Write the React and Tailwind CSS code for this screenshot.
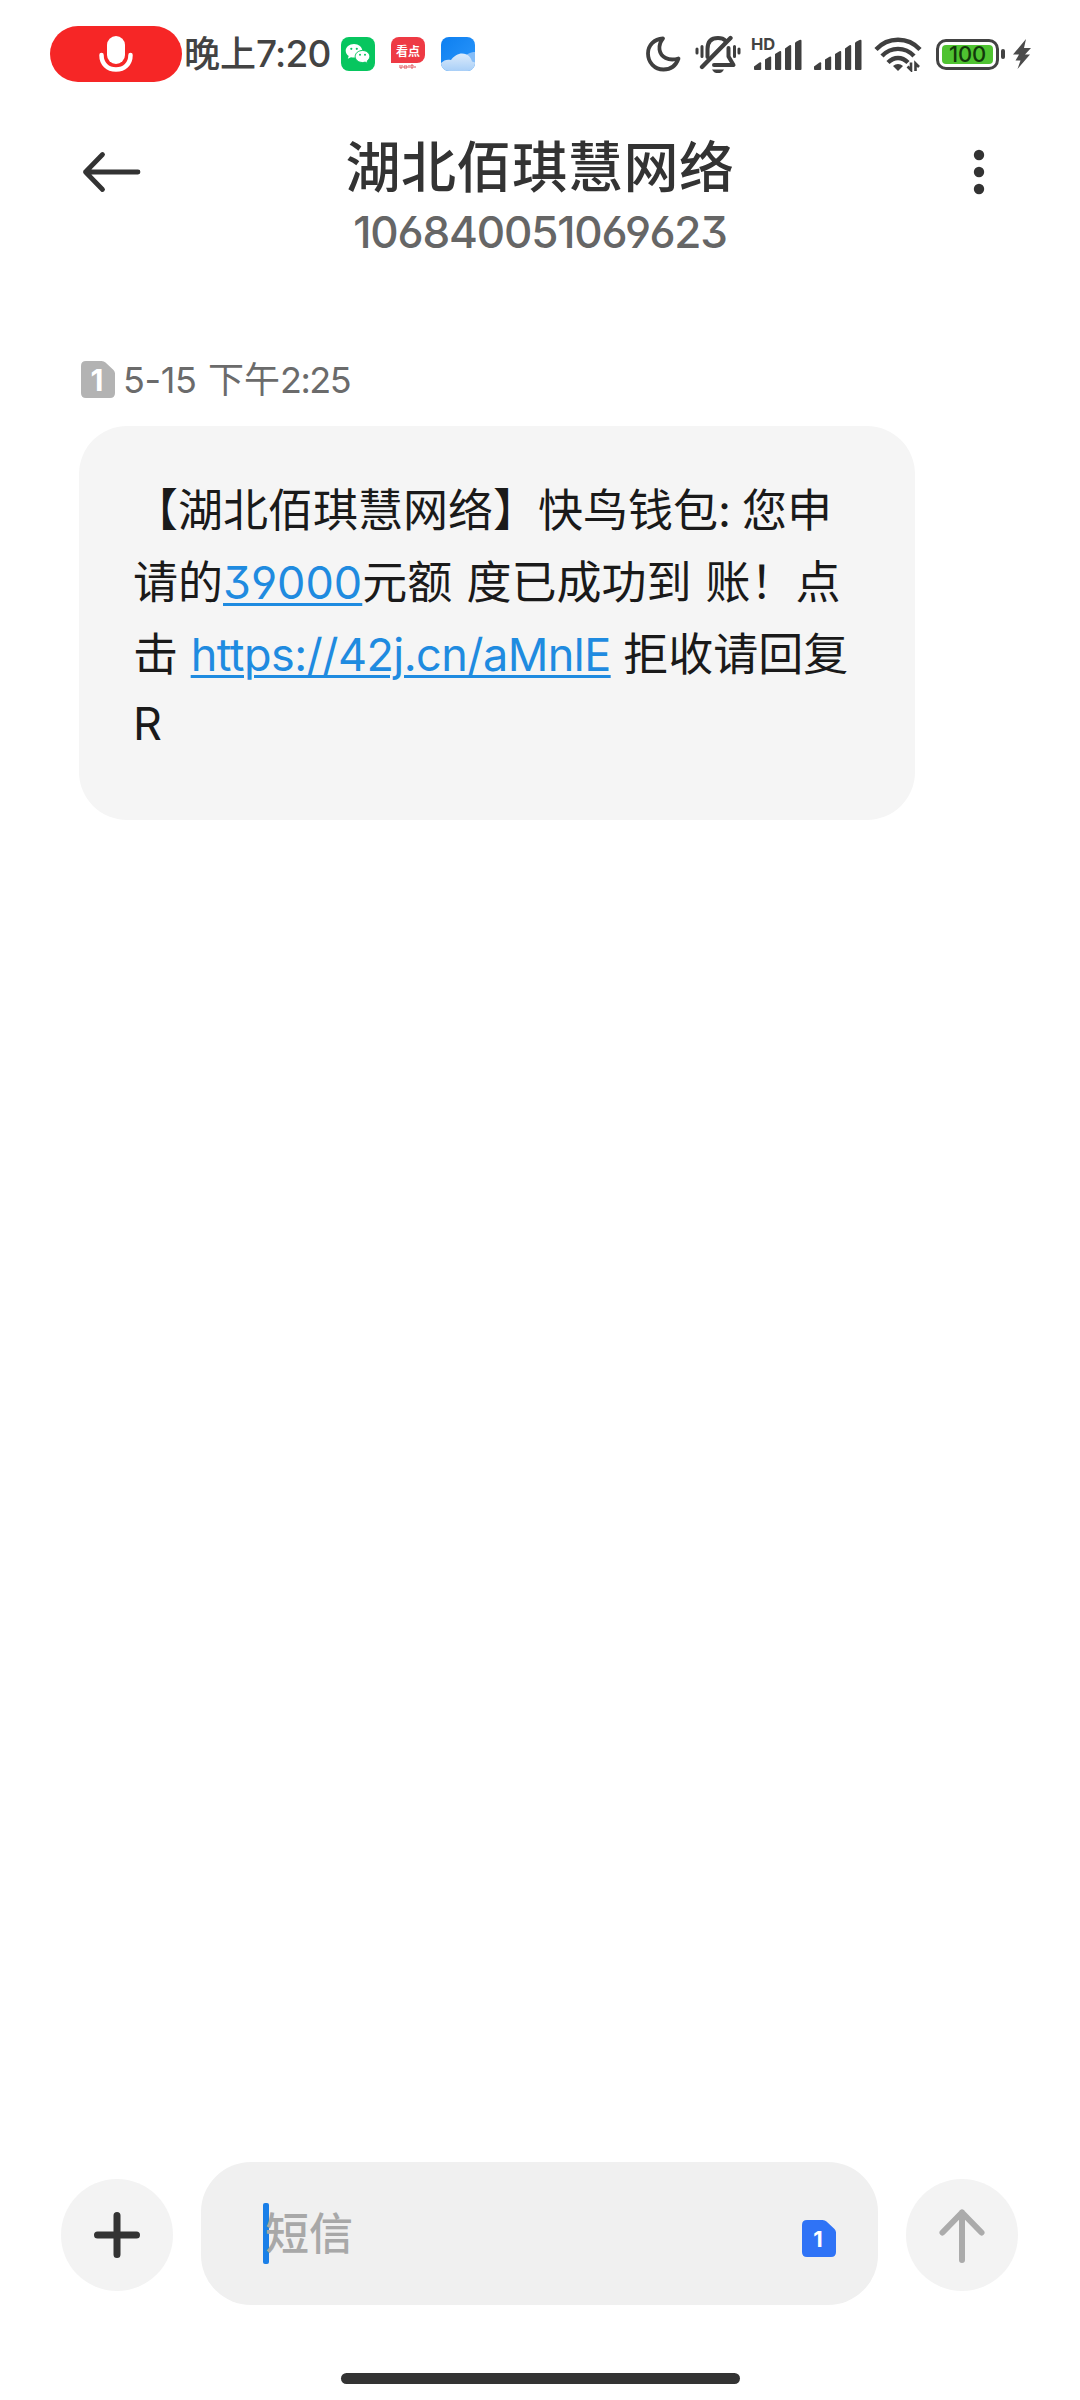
const FONT = "font-['Inter','Noto_Sans_CJK_SC',sans-serif]";

function Han({ children, className = "" }) {
  return <span className={"font-['Noto_Sans_CJK_SC',sans-serif] " + className}>{children}</span>;
}

function Num({ children, className = "" }) {
  return (
    <span className={"[font-feature-settings:'cv03','cv04','cv09'] font-['Inter',sans-serif] " + className}>
      {children}
    </span>
  );
}

function Signal({ className }) {
  return (
    <svg viewBox="0 0 48 32" className={"h-8 w-12 shrink-0 " + className} fill="#3f3f3f">
      <path d="M0 27.500l5.500-4q1.700-.7 1.700 .7V30q0 1-1 1H1q-1 0-1-1z" />
      <path d="M11 20.500l4.500-2.800q1.700-.6 1.700 .7V30q0 1-1 1H12q-1 0-1-1z" />
      <path d="M21 15l4.500-2.800q1.700-.6 1.700 .7V30q0 1-1 1H22q-1 0-1-1z" />
      <path d="M31 9.500l4.500-3.200q1.700-.6 1.700 .7V30q0 1-1 1H32q-1 0-1-1z" />
      <path d="M41 4q0-1 4.500-3 2-.6 2 .7V30q0 1-1 1H42q-1 0-1-1z" />
    </svg>
  );
}

function StatusBar() {
  return (
    <div className="flex h-[108px] items-center pl-[50px] text-[#434343]">
      <div className="flex h-14 w-[132px] shrink-0 items-center justify-center rounded-full bg-[#f62626]">
        <svg viewBox="0 0 34 38" className="h-[38px] w-[34px]">
          <rect x="8" y="1" width="18" height="28" rx="9" fill="#fff" />
          <path d="M2.500 20c0 9 6 14.500 14.500 14.500S31.500 29 31.500 20" fill="none" stroke="#fff" strokeWidth="4.500" strokeLinecap="round" />
        </svg>
      </div>
      <div className="mb-[3px] flex w-[159px] shrink-0 items-baseline pl-[2px] leading-none whitespace-nowrap">
        <Han className="text-[36px] font-medium">晚上</Han>
        <Num className="text-[37px] font-medium tracking-[-0.8px]">7:20</Num>
      </div>
      <svg viewBox="0 0 34 34" className="h-[34px] w-[34px] shrink-0">
        <rect width="34" height="34" rx="8" fill="#07c65f" />
        <path d="M13 7c-4.700 0-8.300 3-8.300 6.800 0 2.200 1.200 4.100 3 5.300l-.9 2.700 3.200-1.600c1 .3 2 .4 3 .4 4.700 0 8.300-3 8.300-6.800S17.700 7 13 7z" fill="#fff" />
        <path d="M21.500 13.500c-4.200 0-7.300 2.700-7.300 6s3.100 6 7.300 6c.9 0 1.800-.1 2.600-.4l2.700 1.300-.6-2.400c1.600-1.100 2.600-2.700 2.600-4.500 0-3.300-3.100-6-7.300-6z" fill="#fff" stroke="#07c65f" strokeWidth="1" />
        <g fill="#07c65f">
          <circle cx="10.300" cy="11.800" r="1.100" />
          <circle cx="15.800" cy="11.800" r="1.100" />
          <circle cx="19" cy="17.700" r="1" />
          <circle cx="24" cy="17.700" r="1" />
        </g>
      </svg>
      <div className="ml-4 flex h-[34px] w-[34px] shrink-0 flex-col overflow-hidden rounded-[8px] bg-white">
        <div className="flex h-[26px] w-full items-center justify-center rounded-br-[8px] bg-[#ee3a44] pt-[2px] font-['Noto_Sans_CJK_SC',sans-serif] text-[12px] leading-none font-bold text-white">
          看点
        </div>
        <svg viewBox="0 0 34 8" className="h-2 w-full">
          <path d="M9 2v3h2V2m2 1h3v2h-3zm5-1v3m2-3h2v3h-2zm4 1v2" fill="none" stroke="#e0535b" strokeWidth="1" />
        </svg>
      </div>
      <svg viewBox="0 0 34 34" className="ml-4 h-[34px] w-[34px] shrink-0">
        <defs>
          <linearGradient id="sky" x1="0" y1="0" x2="1" y2="1">
            <stop offset="0" stopColor="#0d7ff0" />
            <stop offset="1" stopColor="#2c97fb" />
          </linearGradient>
          <linearGradient id="cloud" x1="0" y1="0" x2="0" y2="1">
            <stop offset="0" stopColor="#dcebfb" />
            <stop offset="1" stopColor="#a9cff7" />
          </linearGradient>
          <clipPath id="tile"><rect width="34" height="34" rx="8" /></clipPath>
        </defs>
        <g clipPath="url(#tile)">
          <rect width="34" height="34" fill="url(#sky)" />
          <path d="M22 22c3-5 7-7 12-7v19H22z" fill="#85bdf8" />
          <path d="M0 26c3-3 6-4 10-3 3-4 7-6.500 11-6.500 6 0 9 4 10 8l3 1V34H0z" fill="url(#cloud)" />
        </g>
      </svg>
      <svg viewBox="0 0 36 38" className="ml-[170px] h-[38px] w-9 shrink-0" fill="none" stroke="#3f3f3f" strokeWidth="3.800" strokeLinejoin="round">
        <path d="M18 3.500C9 4 3 10.500 3 18.500 3 27.500 9.500 34.500 18.500 34.500c7 0 12.500-4 15-11-10 3-18-1.500-19-9-.5-4 1-8 3.500-11z" />
      </svg>
      <svg viewBox="0 0 46 38" className="ml-[14px] h-[38px] w-[46px] shrink-0" fill="none" stroke="#3f3f3f" strokeWidth="4" strokeLinecap="round">
        <path d="M12.500 22V14C12.500 6.500 16.500 3 23 3c3.500 0 6 1 7.800 2.800" />
        <path d="M33.500 13v8.500l5 8.500H19" strokeLinejoin="round" />
        <path d="M35.500 3L7 32" strokeWidth="4.300" />
        <path d="M2 14v4M7 11.500v10M39.500 11.500v10M44 14v4" strokeWidth="3" />
        <path d="M17 34.500h12c-1.500 3-3.500 3.500-6 3.500s-4.500-.5-6-3.500z" fill="#3f3f3f" stroke="none" />
      </svg>
      <div className="relative mt-[2px] ml-[13px] shrink-0">
        <Signal className="block" />
        <span className="absolute top-[-3px] left-[-3px] font-['Inter',sans-serif] text-[16.5px] leading-none font-bold">HD</span>
      </div>
      <Signal className="mt-[2px] ml-[12px]" />
      <svg viewBox="0 0 48 36" className="ml-[12px] h-9 w-12 shrink-0" fill="none" stroke="#3f3f3f" strokeWidth="4.400">
        <path d="M2 13.500C14 .5 34 .5 46 13.500" />
        <path d="M8 20C17 10.500 31 10.500 40 20" />
        <path d="M14 26.500c6-6 14-6 20 0" />
        <path d="M24 35l-5-5c3-2.800 7-2.800 10 0z" fill="#3f3f3f" stroke="none" />
        <path d="M37 26.500v7.500l-3.500-3.500M41.500 35v-7.500l3.500 3.500" strokeWidth="2.600" />
      </svg>
      <div className="ml-[14px] flex h-[31px] w-[63px] shrink-0 items-center justify-center rounded-[10px] border-[3.5px] border-[#434343] p-[3px]">
        <div className="flex h-full w-full items-center justify-center rounded-[4px] bg-[#4fc331] font-['Inter',sans-serif] text-[22px] leading-none font-medium tracking-[-0.2px] text-[#12380b]">
          100
        </div>
      </div>
      <div className="ml-[2px] h-[10px] w-[4px] shrink-0 rounded-[2px] bg-[#434343]" />
      <svg viewBox="0 0 20 32" className="ml-[7px] h-8 w-5 shrink-0" fill="#4b4b4b">
        <path d="M14 1L1 16.500h6l-3.500 6h5L5.500 31 18 16.500h-5l6-6.500h-7z" />
      </svg>
    </div>
  );
}

function Sim({ className = "", color, text }) {
  return (
    <div className={"relative shrink-0 " + className}>
      <svg viewBox="0 0 34 37" className="block h-[37px] w-[34px]" fill={color}>
        <path d="M5 0h15.500q2.500 0 4 1.500l8 7.500Q34 10.500 34 12.500v19.500q0 5-5 5H5q-5 0-5-5V5q0-5 5-5z" />
      </svg>
      <span className={"absolute inset-0 flex items-center justify-center pr-[2px] font-['Inter',sans-serif] leading-none font-bold text-white " + text}>1</span>
    </div>
  );
}

const LINE = "h-[72px] whitespace-pre text-[45px] leading-[72px]";
const LINK = "text-[#1f8be0] underline decoration-[2.5px] underline-offset-[4px]";

export default function App() {
  return (
    <div className={"flex h-[2400px] w-[1080px] flex-col overflow-hidden bg-white " + FONT}>
      <StatusBar />
      <header className="flex h-[210px] items-start pl-[82px]">
        <svg viewBox="0 0 60 42" className="mt-[43px] h-[42px] w-[60px] shrink-0" fill="none" stroke="#333" strokeWidth="4.800" strokeLinecap="round" strokeLinejoin="round">
          <path d="M3.500 21H56M20.500 3.500L3.500 21l17 17.500" />
        </svg>
        <div className="flex w-[796px] shrink-0 flex-col items-center leading-none">
          <h1 className="mt-[27px] h-[56px] whitespace-nowrap text-[#333]">
            <Han className="text-[55px] leading-[56px] font-medium tracking-[0.6px]">湖北佰琪慧网络</Han>
          </h1>
          <Num className="mt-[19px] text-[44px] leading-[44px] font-medium tracking-[-1.15px] text-[#666]">106840051069623</Num>
        </div>
        <svg viewBox="0 0 12 46" className="mt-[41px] ml-[35px] h-[46px] w-3 shrink-0" fill="#333">
          <circle cx="6" cy="6" r="5.200" />
          <circle cx="6" cy="23" r="5.200" />
          <circle cx="6" cy="40" r="5.200" />
        </svg>
      </header>
      <main className="flex flex-1 flex-col pl-[79px]">
        <div className="mt-[43px] flex h-[37px] items-center pl-[2px]">
          <Sim color="#b3b3b3" text="text-[30px]" />
          <div className="mb-[2px] ml-[8px] flex items-baseline leading-none whitespace-pre text-[#6b6b6b]">
            <Num className="w-[85px] text-[36px] tracking-[-0.4px]">5-15</Num>
            <Han className="text-[36px]">下午</Han>
            <Num className="text-[36px] tracking-[-1.5px]">2:25</Num>
          </div>
        </div>
        <div className="mt-[28px] flex h-[394px] w-[836px] flex-col rounded-[48px] bg-[#f5f5f5] pt-[46px] pl-[54px] text-[#1a1a1a]">
          <p className={LINE}>
            <Han>【湖北佰琪慧网络】快鸟钱包</Han>
            <Num className="tracking-[-0.8px]">: </Num>
            <Han>您申</Han>
          </p>
          <p className={LINE}>
            <Han>请的</Han>
            <Num className={LINK}>39000</Num>
            <Han>元额</Han>
            <Num className="tracking-[1.5px]"> </Num>
            <Han>度已成功到</Han>
            <Num className="tracking-[1.5px]"> </Num>
            <Han>账！点</Han>
          </p>
          <p className={LINE}>
            <Han>击</Han>
            <Num> </Num>
            <Num className={"tracking-[-0.55px] " + LINK}>https://42j.cn/aMnlE</Num>
            <Num> </Num>
            <Han>拒收请回复</Han>
          </p>
          <p className={LINE}>
            <Num>R</Num>
          </p>
        </div>
      </main>
      <footer className="flex h-[143px] items-center pl-[61px]">
        <button className="mt-[3px] flex h-28 w-28 items-center justify-center rounded-full bg-[#f3f3f3]">
          <svg viewBox="0 0 48 48" className="h-12 w-12" stroke="#333" strokeWidth="7" strokeLinecap="round">
            <path d="M24 4.500v39M4.500 24h39" />
          </svg>
        </button>
        <div className="ml-[28px] flex h-[143px] w-[677px] items-center rounded-[50px] bg-[#f0f0f0] pr-[42px] pl-[62px]">
          <div className="h-[61px] w-[6px] rounded-[2px] bg-[#1a7fe8]" />
          <Han className="mb-[6px] -ml-[4px] text-[44px] leading-none font-medium text-[#a8a8a8]">短信</Han>
          <Sim className="mt-[10px] ml-auto" color="#2f73f6" text="text-[22px]" />
        </div>
        <button className="mt-[3px] ml-[28px] flex h-28 w-28 items-center justify-center rounded-full bg-[#f3f3f3]">
          <svg viewBox="0 0 48 56" className="h-14 w-12" fill="none" stroke="#ababab" strokeWidth="6" strokeLinecap="round" strokeLinejoin="round">
            <path d="M24 53V5.500M4.500 25.500L24 5.500l19.500 20" />
          </svg>
        </button>
      </footer>
      <div className="flex h-[95px] justify-center pt-[68px]">
        <div className="h-[11px] w-[399px] rounded-full bg-[#333]" />
      </div>
    </div>
  );
}
